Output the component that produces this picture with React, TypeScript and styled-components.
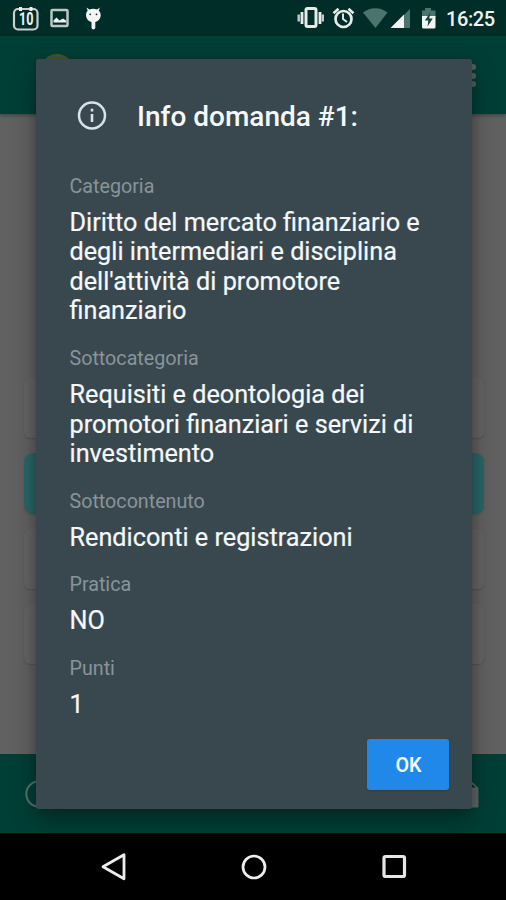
import React from "react";
import styled, { createGlobalStyle } from "styled-components";

const GlobalStyle = createGlobalStyle`
  * { box-sizing: border-box; }
  html, body { margin: 0; background: #000; }
  body { font-family: Roboto, "Noto Sans", sans-serif; }
`;

const Screen = styled.div`
  position: relative;
  width: 506px;
  height: 900px;
  overflow: hidden;
  display: flex;
  flex-direction: column;
`;

const StatusBar = styled.header`
  height: 36px;
  flex: none;
  display: flex;
  align-items: center;
  justify-content: space-between;
  background: #002d27;
  color: #eef3f2;
`;

const StatusText = styled.span`
  width: 49px;
  font-size: 20px;
  font-weight: 500;
  line-height: 36px;
  letter-spacing: -0.4px;
  margin: 0 11px 0 9px;
  padding-top: 2px;
  white-space: nowrap;
`;

const StatusGroup = styled.div`
  display: flex;
  align-items: center;
  height: 36px;
`;

const AppBar = styled.div`
  height: 78px;
  flex: none;
  background: #003f36;
  display: flex;
  align-items: flex-start;
  justify-content: space-between;
  padding: 18px 30px 0 40px;
  position: relative;
  box-shadow: 0 2px 3px rgba(0, 0, 0, 0.25);
`;

const Logo = styled.div`
  width: 34px;
  height: 34px;
  border-radius: 50%;
  background: #46552a;
`;

const Overflow = styled.div`
  display: flex;
  flex-direction: column;
  gap: 2.5px;
  padding-top: 10px;
`;

const Dot = styled.i`
  width: 6px;
  height: 6px;
  border-radius: 50%;
  background: #53645f;
`;

const Content = styled.main`
  height: 640px;
  flex: none;
  background: #616161;
  padding: 264px 22px 0 24px;
  display: flex;
  flex-direction: column;
  gap: 15px;
`;

const Answer = styled.div<{ $selected?: boolean }>`
  height: ${(p) => (p.$selected ? 61 : 60)}px;
  flex: none;
  border-radius: ${(p) => (p.$selected ? 9 : 6)}px;
  background: ${(p) => (p.$selected ? "#2b6567" : "#646464")};
  box-shadow: 0 1px 2px rgba(0, 0, 0, 0.16);
`;

const Footer = styled.div`
  height: 79px;
  flex: none;
  background: #003f36;
  display: flex;
  align-items: center;
  justify-content: space-between;
  padding: 0 27px 0 25px;
`;

const NavBar = styled.nav`
  height: 67px;
  flex: none;
  background: #000;
  display: flex;
  align-items: center;
  justify-content: center;
  gap: 110px;
  padding-left: 1px;
`;

const Dialog = styled.section`
  position: absolute;
  left: 36px;
  top: 59px;
  width: 436px;
  height: 750px;
  border-radius: 3px;
  background: #39484f;
  box-shadow: 0 12px 26px rgba(0, 0, 0, 0.32), 0 0 8px rgba(0, 0, 0, 0.16);
  padding: 0 23px 19px 33.5px;
  display: flex;
  flex-direction: column;
`;

const DialogHeader = styled.div`
  height: 115.5px;
  display: flex;
  align-items: center;
  gap: 30.5px;
  padding: 0 0 2px 7px;
`;

const Title = styled.h1`
  margin: 0;
  padding-top: 3px;
  color: #f4f8fa;
  font-size: 28px;
  font-weight: 500;
  line-height: 32px;
  white-space: nowrap;
`;

const Details = styled.dl`
  margin: 0;
  display: flex;
  flex-direction: column;
  gap: 20.8px;
`;

const Label = styled.dt`
  color: #89949a;
  font-size: 19.7px;
  line-height: 23px;
  margin-bottom: 10px;
`;

const Value = styled.dd`
  margin: 0;
  color: #f5f8fa;
  font-size: 25.22px;
  line-height: 29.65px;
  white-space: pre-line;
  -webkit-text-stroke: 0.2px #f5f8fa;
`;

const Actions = styled.div`
  margin-top: auto;
  display: flex;
  justify-content: flex-end;
`;

const OkButton = styled.button`
  width: 82px;
  height: 51px;
  border: 0;
  border-radius: 3px;
  background: #2088e8;
  color: #f2f8fe;
  font: 600 19.7px Roboto, sans-serif;
  padding: 2px 0 0 1px;
  box-shadow: 0 1px 2px rgba(0, 0, 0, 0.15);
`;

const details = [
  {
    label: "Categoria",
    value:
      "Diritto del mercato finanziario e\ndegli intermediari e disciplina\ndell'attività di promotore\nfinanziario",
  },
  {
    label: "Sottocategoria",
    value: "Requisiti e deontologia dei\npromotori finanziari e servizi di\ninvestimento",
  },
  { label: "Sottocontenuto", value: "Rendiconti e registrazioni" },
  { label: "Pratica", value: "NO" },
  { label: "Punti", value: "1" },
];

const NotificationIcons = () => (
  <svg width="110" height="36" viewBox="0 0 110 36">
    <rect x="14" y="9" width="23.5" height="20.5" rx="4" fill="none" stroke="#c9d1cf" strokeWidth="2.2" />
    <path d="M20.500 7v4M31 7v4" stroke="#eef3f2" strokeWidth="3" />
    <text x="19" y="25" textLength="14.500" lengthAdjust="spacingAndGlyphs" fontFamily="Roboto" fontWeight="700" fontSize="17.500" fill="#eef3f2">
      10
    </text>
    <rect x="51.5" y="10" width="16" height="16" rx="1" fill="none" stroke="#bcc6c4" strokeWidth="2.5" />
    <path d="M53.5 22.5v-2l3-3 3 3 3.500-2 3 2v2z" fill="#eef3f2" />
    <path d="M86 15c0-2 .7-3.500 1.700-4.300L86.500 7.500l2.800 2c2.400-1 5.400-1 7.800 0L99.800 7.500l-1 3.200c1 .9 1.900 2.500 1.900 4.300 0 4.200-3.200 6.500-5.400 7v6a2 2 0 0 1-3.800 0v-6c-2.300-.5-5.500-2.800-5.500-7z" fill="#f3f6f5" />
    <circle cx="90.200" cy="14.300" r="0.9" fill="#002d27" />
    <circle cx="96.500" cy="14.300" r="0.9" fill="#002d27" />
  </svg>
);

const SystemIcons = () => (
  <svg width="142" height="36" viewBox="295 0 142 36">
    <rect x="306" y="8.500" width="10" height="18" rx="1.500" fill="none" stroke="#e7eceb" strokeWidth="3" />
    <path d="M302 12v12M320 12v12" stroke="#e7eceb" strokeWidth="2.800" />
    <path d="M298.700 14.500v7M322.800 14.500v7" stroke="#c2cbc9" strokeWidth="2.400" />
    <circle cx="343.500" cy="19" r="8" fill="none" stroke="#e7eceb" strokeWidth="2.700" />
    <path d="M343 13.500V19l4 3" fill="none" stroke="#e7eceb" strokeWidth="1.900" />
    <path d="M333.500 13.300l5-4.500M348.500 8.800l5 4.500" stroke="#e7eceb" strokeWidth="2.500" />
    <path d="M363 12.500C370 6.700 380.500 6.700 387.500 12.500L375.500 28z" fill="#4c746e" />
    <path d="M410 9v19h-19z" fill="#4c746e" />
    <path d="M404 14.500V28h-13.500z" fill="#f2f5f4" />
    <path d="M422 10.500h3V8h6v2.500h4.500V17H422z" fill="#4c746e" />
    <path d="M422 16h13.500v11q0 1.500-1.500 1.500h-10.500q-1.500 0-1.500-1.500z" fill="#f2f5f4" />
    <path d="M430.300 12.500l-5.500 8h3.500l-.8 6 5.300-8h-3.500z" fill="#17443d" />
  </svg>
);

export default function App() {
  return (
    <>
      <GlobalStyle />
      <Screen>
        <StatusBar>
          <NotificationIcons />
          <StatusGroup>
            <SystemIcons />
            <StatusText>16:25</StatusText>
          </StatusGroup>
        </StatusBar>
        <AppBar>
          <Logo />
          <Overflow>
            <Dot />
            <Dot />
            <Dot />
          </Overflow>
        </AppBar>
        <Content>
          <Answer />
          <Answer $selected />
          <Answer />
          <Answer />
        </Content>
        <Footer>
          <svg width="28" height="28" viewBox="0 0 28 28">
            <circle cx="14" cy="14" r="12.700" fill="none" stroke="#55716c" strokeWidth="2" />
          </svg>
          <svg width="30" height="28" viewBox="0 0 30 28">
            <path d="M1 1h21l7.500 7v18.500q0 1-1 1H1z" fill="#5c6664" />
            <path d="M22 3.500v4h5z" fill="#00322b" />
          </svg>
        </Footer>
        <NavBar>
          <svg width="30" height="34" viewBox="0 0 30 34">
            <path d="M25 4.800v24L4 16.800z" fill="none" stroke="#eee" strokeWidth="2.800" strokeLinejoin="round" />
          </svg>
          <svg width="30" height="30" viewBox="0 0 30 30">
            <circle cx="15" cy="15" r="11" fill="none" stroke="#eee" strokeWidth="2.700" />
          </svg>
          <svg width="30" height="30" viewBox="0 0 30 30">
            <rect x="5" y="4.500" width="20.500" height="20" rx="1.500" fill="none" stroke="#e6e6e6" strokeWidth="3.200" />
          </svg>
        </NavBar>
        <Dialog role="dialog" aria-labelledby="dialog-title">
          <DialogHeader>
            <svg width="30" height="30" viewBox="0 0 30 30">
              <circle cx="15" cy="14.500" r="13" fill="none" stroke="#d9e2e9" strokeWidth="2.500" />
              <path d="M15 13v8M15 7.800v2.800" stroke="#d9e2e9" strokeWidth="2.600" />
            </svg>
            <Title id="dialog-title">Info domanda #1:</Title>
          </DialogHeader>
          <Details>
            {details.map((item) => (
              <div key={item.label}>
                <Label>{item.label}</Label>
                <Value>{item.value}</Value>
              </div>
            ))}
          </Details>
          <Actions>
            <OkButton>OK</OkButton>
          </Actions>
        </Dialog>
      </Screen>
    </>
  );
}
